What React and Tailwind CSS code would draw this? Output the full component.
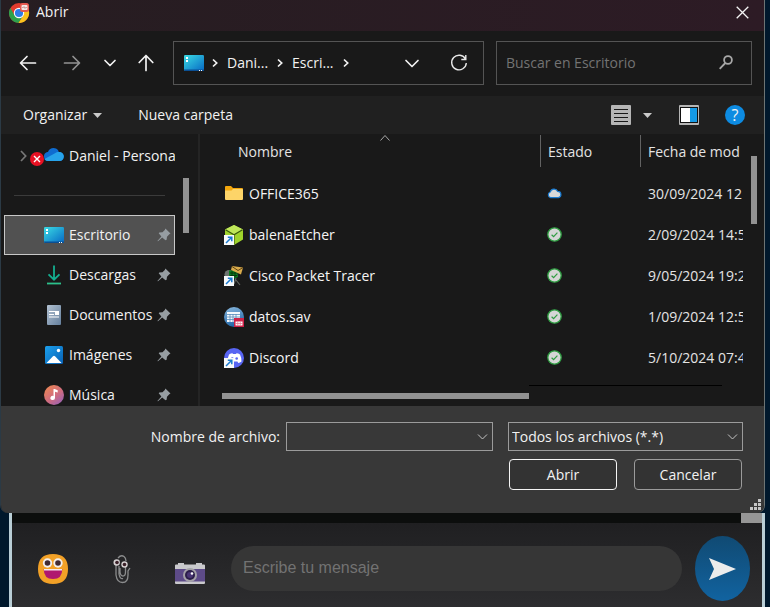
import React from "react";

const NavArrow = ({ d, color = "#f2f2f2", size = 20 }) => (
  <svg width={size} height={size} viewBox="0 0 20 20" fill="none" stroke={color} strokeWidth="1.700" strokeLinecap="round" strokeLinejoin="round" className="shrink-0">
    <path d={d} />
  </svg>
);

const BACK = "M17.500 10H2.800M9 3.500 2.500 10 9 16.500";
const FORWARD = "M2.500 10h14.700M11 3.500l6.500 6.500L11 16.500";
const UP = "M10 17.500V2.800M3.200 9.500 10 2.500l6.800 7";
const DOWN = "M5 7.500l5 5 5-5";

const CrumbArrow = () => (
  <svg width="6" height="10" viewBox="0 0 6 10" fill="none" stroke="#f2f2f2" strokeWidth="1.700" className="shrink-0">
    <path d="M1 1.500 4.700 5 1 8.500" />
  </svg>
);

const Chrome = () => (
  <svg width="22" height="22" viewBox="0 0 22 22" className="shrink-0">
    <circle cx="10" cy="12" r="10" fill="#e33b2e" />
    <path d="M1.300 7A10 10 0 0 0 9.500 22L14.300 14.500 10 12 5.700 14.500Z" fill="#2da14b" />
    <path d="M9.500 22A10 10 0 0 0 19 7.500H10L14.500 14.300Z" fill="#fcc31e" />
    <circle cx="10" cy="12" r="5.200" fill="#fff" />
    <circle cx="10" cy="12" r="4.100" fill="#2f7de9" />
    <rect x="11" y="2" width="9" height="9" rx="2.500" fill="#e65a50" />
    <rect x="12.500" y="4" width="6" height="5" rx="1" fill="#f7e9e7" />
    <path d="M13 6.500h1.500l.5-1 1 2 .5-1H18" stroke="#b9847f" strokeWidth=".7" fill="none" />
  </svg>
);

const Desktop = () => (
  <svg width="20" height="16" viewBox="0 0 20 16" className="shrink-0">
    <defs>
      <linearGradient id="desk" x1="0" y1="0" x2="1" y2="1">
        <stop offset="0" stopColor="#3bdce4" />
        <stop offset="1" stopColor="#0668c4" />
      </linearGradient>
    </defs>
    <rect width="20" height="16" rx="1.300" fill="url(#desk)" />
    <path d="M0 14.500h20v.2a1.300 1.300 0 0 1-1.300 1.300H1.300A1.300 1.300 0 0 1 0 14.700Z" fill="#0a4f94" />
    <path d="M2 2h2v2H2zM2 5h2v2H2zM15 15h1v1h-1zM17 15h1v1h-1z" fill="#fff" />
  </svg>
);

const Pin = () => (
  <svg width="14" height="14" viewBox="0 0 14 14" className="shrink-0">
    <path d="M8.400.6 13.500 5.600 12.300 6.200 10 8.700 9.600 11.800 8.500 12.300 5.200 9.400 1 13.300.4 12.900 4.400 8.500 1.700 5.300 2.300 4.500 5.500 4.300 7.800 1.900Z" fill="#969da2" />
  </svg>
);

const Download = () => (
  <svg width="20" height="20" viewBox="0 0 20 20" fill="none" strokeWidth="1.800" className="shrink-0">
    <path d="M10 .5v14M4.500 9.300l5.500 5.400 5.500-5.400" stroke="#14ae90" />
    <path d="M3 18.500h14" stroke="#2cc08b" />
  </svg>
);

const Doc = () => (
  <svg width="20" height="20" viewBox="0 0 20 20" className="shrink-0">
    <defs>
      <linearGradient id="doc" x1="0" y1="0" x2="1" y2="1">
        <stop offset="0" stopColor="#b3c2d2" />
        <stop offset="1" stopColor="#647f9d" />
      </linearGradient>
    </defs>
    <rect x="3" width="14" height="20" rx="1" fill="url(#doc)" />
    <path d="M5 6.500h6M5 9.500h5M5 12h10" stroke="#fff" strokeWidth="1.200" />
    <rect x="11" y="6" width="4" height="4" fill="#fff" />
  </svg>
);

const Picture = () => (
  <svg width="20" height="20" viewBox="0 0 20 20" className="shrink-0">
    <defs>
      <linearGradient id="pic" x1="0" y1="0" x2="1" y2="1">
        <stop offset="0" stopColor="#1ca0ec" />
        <stop offset="1" stopColor="#0760b5" />
      </linearGradient>
    </defs>
    <rect x="1" y="1" width="18" height="18" rx="1.500" fill="url(#pic)" />
    <path d="M2.500 18 9 11.200q1-1 2 0L17.500 18Z" fill="#fff" />
    <circle cx="14.500" cy="5.500" r="1.700" fill="#fff" />
  </svg>
);

const Music = () => (
  <svg width="20" height="20" viewBox="0 0 20 20" className="shrink-0">
    <defs>
      <linearGradient id="mus" x1="0" y1="0" x2=".8" y2="1">
        <stop offset="0" stopColor="#f08a4b" />
        <stop offset=".6" stopColor="#cf6c80" />
        <stop offset="1" stopColor="#9a62b4" />
      </linearGradient>
    </defs>
    <circle cx="10" cy="10" r="10" fill="url(#mus)" />
    <path d="M9.500 4h1.200l3 1.300v2.200l-2.700-.8v6.300a2.300 2.100 0 1 1-1.500-2Z" fill="#fff" />
  </svg>
);

const OneDrive = () => (
  <svg width="35" height="20" viewBox="0 0 35 20" className="shrink-0">
    <path d="M14 10.500C14 7 16.500 6 18 6c1-3.500 5-5 8-3.500 1.700.8 2.500 2.200 2.800 3.500 3 0 5 2 5 4.500S32 15 29.500 15H18c-2.500 0-4-1.800-4-4.500Z" fill="#0f6cd0" />
    <path d="M17.500 15c-1.500-.2-2.500-1-3-2L25 7.200c1-.8 2.400-1.200 3.800-1.200 3 0 5 2 5 4.500S32 15 29.500 15Z" fill="#27a3ea" />
    <circle cx="7" cy="13" r="7" fill="#e81123" />
    <path d="m4 10 6 6m0-6-6 6" stroke="#fff" strokeWidth="1.400" />
  </svg>
);

const Folder = () => (
  <svg width="20" height="20" viewBox="0 0 20 20" className="shrink-0">
    <path d="M1 3a1 1 0 0 1 1-1h5l2 2h9a1 1 0 0 1 1 1v3H1Z" fill="#f2a60d" />
    <path d="M1 6.500h6.500L9 5h9a1 1 0 0 1 1 1v9a1 1 0 0 1-1 1H2a1 1 0 0 1-1-1Z" fill="#fdd468" />
  </svg>
);

const Shortcut = () => (
  <g>
    <rect x="0" y="10" width="10" height="10" fill="#f8fafb" />
    <path d="M2 18 7.500 12.500M3.800 12.200h4v4" stroke="#1a7ad0" strokeWidth="1.500" fill="none" />
  </g>
);

const Balena = () => (
  <svg width="20" height="20" viewBox="0 0 20 20" className="shrink-0">
    <path d="M10 0 19 4.500v10L10 20 1 14.500v-10Z" fill="#9fd32c" />
    <path d="M10 0 19 4.500 10 9.800 1 4.500Z" fill="#bfe75a" />
    <path d="M1.500 4.800 10 9.800l8.500-5M10 9.800V19" stroke="#39590b" strokeWidth="1.200" fill="none" />
    <Shortcut />
  </svg>
);

const Cisco = () => (
  <svg width="20" height="20" viewBox="0 0 20 20" className="shrink-0">
    <circle cx="5" cy="8.500" r="4.500" fill="#6d7470" />
    <path d="m12 14 4 5M12 12l-2 6" stroke="#62655f" strokeWidth="1.200" />
    <path d="M5 4.500 13 4l1 7-5 2-4-3Z" fill="#0c7d21" />
    <path d="M6 7h7M6 9.500h7M8 4.500v7M11 4.500v7" stroke="#052f0b" strokeWidth=".8" />
    <path d="m8 0 11 1.500-2 7L7 4Z" fill="#d9ab4c" />
    <path d="m8 .5 6 4 5-3" stroke="#5d4214" fill="none" />
    <Shortcut />
  </svg>
);

const Datos = () => (
  <svg width="20" height="20" viewBox="0 0 20 20" className="shrink-0">
    <defs>
      <linearGradient id="dat" x1="0" y1="0" x2=".3" y2="1">
        <stop offset="0" stopColor="#8bb9de" />
        <stop offset="1" stopColor="#2368a9" />
      </linearGradient>
    </defs>
    <circle cx="10" cy="10" r="10" fill="url(#dat)" />
    <path d="M3 5h13v10H3Z" fill="#f3f8fc" />
    <path d="M3 7.500h13M3 10h13M3 12.500h13M6 7v8M9 7v8M12 7v8" stroke="#568bbb" strokeWidth=".8" />
    <rect x="10" y="11" width="10" height="9" fill="#cf2148" />
    <path d="M11.500 14.500h7v4h-7Z" fill="#fff" />
    <path d="M11 16.500h8M13.800 14v5M16.300 14v5" stroke="#e57c94" strokeWidth=".8" />
  </svg>
);

const Discord = () => (
  <svg width="20" height="20" viewBox="0 0 20 20" className="shrink-0">
    <circle cx="10" cy="10" r="10" fill="#5865f2" />
    <path d="M5 6.500Q7 5.200 8.500 5.200l.5.800h3l.5-.8q1.700 0 3.500 1.300 1.700 3.500 1.500 7-1.500 1.300-3.200 1.500l-.9-1.400H8l-1 1.400q-2-.3-3.300-1.500Q3.500 10 5 6.500Z" fill="#fff" />
    <circle cx="8.300" cy="10.500" r="1.300" fill="#5865f2" />
    <circle cx="12.700" cy="10.500" r="1.300" fill="#5865f2" />
    <Shortcut />
  </svg>
);

const Synced = () => (
  <svg width="15" height="15" viewBox="0 0 15 15" role="img" aria-label="Disponible">
    <circle cx="7.500" cy="7.500" r="6.700" fill="#d6d6d6" stroke="#2e9c41" strokeWidth="1.300" />
    <path d="m4.600 7.800 2 1.900 3.800-4" fill="none" stroke="#2e9c41" strokeWidth="1.200" />
  </svg>
);

const CloudOnly = () => (
  <svg width="15" height="15" viewBox="0 0 15 15" role="img" aria-label="En la nube">
    <path d="M3.600 11.700a3 3 0 0 1-.4-5.700A4 4 0 0 1 10.700 5.400a3.200 3.200 0 0 1 .8 6.300Z" fill="#d9d9d9" stroke="#1b7bd0" strokeWidth="1.200" />
  </svg>
);

const Smiley = () => (
  <svg width="30" height="30" viewBox="0 0 30 30">
    <path d="M15 0C25 0 30 5 30 15S25 30 15 30 0 25 0 15 5 0 15 0Z" fill="#f2a127" />
    <circle cx="9.500" cy="9" r="4.700" fill="#f1eeee" />
    <circle cx="20" cy="9" r="4.700" fill="#f1eeee" />
    <circle cx="9.500" cy="9" r="2.800" fill="#402a32" />
    <circle cx="20" cy="9" r="2.800" fill="#402a32" />
    <path d="M5.700 15h18.600q0 10-9.300 10T5.700 15Z" fill="#b0176f" />
    <path d="M6 15h18v1.500H6Z" fill="#f5e9ee" />
  </svg>
);

const Clip = () => (
  <svg width="18" height="30" viewBox="0 0 18 30" fill="none">
    <path d="M5 4Q8 .5 11 2.500q2 1.500 2 4.500M3 11v10q1 7.500 6.500 7.500T15 21v-4l2-3M7 14v4q.5 4 3 4t2.500-4v-7M6 12v8q1 5.500 4 4.500" stroke="#8b8c8d" strokeWidth="1.300" />
    <circle cx="3.700" cy="8.500" r="3.200" fill="#d5d0d1" />
    <circle cx="11.500" cy="10.500" r="3.200" fill="#d5d0d1" />
    <circle cx="4" cy="8.500" r="1.800" fill="#3b2028" />
    <circle cx="11.500" cy="10.500" r="1.800" fill="#3b2028" />
  </svg>
);

const Camera = () => (
  <svg width="30" height="21" viewBox="0 0 30 21">
    <path d="M3 0h6v1.500h12V0h6v1.500h2a1 1 0 0 1 1 1V20a1 1 0 0 1-1 1H1a1 1 0 0 1-1-1V2.500a1 1 0 0 1 1-1h2Z" fill="#c9c9cc" />
    <rect y="6" width="30" height="12.500" fill="#5d4b88" />
    <circle cx="15" cy="12" r="7" fill="#a4a2a8" />
    <circle cx="15" cy="12" r="5" fill="#2b1e49" />
    <circle cx="15" cy="12" r="3" fill="#493574" />
    <circle cx="17" cy="10.500" r="1.300" fill="#fff" />
  </svg>
);

const places = [
  { name: "Escritorio", Icon: Desktop, active: true },
  { name: "Descargas", Icon: Download },
  { name: "Documentos", Icon: Doc },
  { name: "Imágenes", Icon: Picture },
  { name: "Música", Icon: Music },
];

const files = [
  { name: "OFFICE365", Icon: Folder, Status: CloudOnly, date: "30/09/2024 12" },
  { name: "balenaEtcher", Icon: Balena, Status: Synced, date: "2/09/2024 14:5" },
  { name: "Cisco Packet Tracer", Icon: Cisco, Status: Synced, date: "9/05/2024 19:2" },
  { name: "datos.sav", Icon: Datos, Status: Synced, date: "1/09/2024 12:5" },
  { name: "Discord", Icon: Discord, Status: Synced, date: "5/10/2024 07:4" },
];

const ComboArrow = () => (
  <svg width="11" height="6" viewBox="0 0 11 6" fill="none" stroke="#c4c4c4" className="pointer-events-none absolute right-[5px] top-3">
    <path d="m1 .5 4.500 4.500L10 .5" />
  </svg>
);

function TitleBar() {
  return (
    <header className="flex h-[31px] items-start justify-between bg-linear-to-r from-[#261d21] to-[#2d1b25] pl-2 pr-[15px]">
      <div className="flex items-center gap-[5px]">
        <Chrome />
        <h1 className="h-6 leading-6">Abrir</h1>
      </div>
      <button aria-label="Cerrar" className="pt-[6px]">
        <svg width="13" height="13" viewBox="0 0 13 13" stroke="#f4f4f4" strokeWidth="1.300">
          <path d="m.7.7 11.600 11.600m0-11.600L.7 12.300" />
        </svg>
      </button>
    </header>
  );
}

function NavBar() {
  return (
    <nav className="flex h-[65px] items-center bg-[#191919] pb-0.5 pl-[17px] pr-3">
      <button aria-label="Atrás"><NavArrow d={BACK} /></button>
      <button aria-label="Adelante" className="ml-6"><NavArrow d={FORWARD} color="#929292" /></button>
      <button aria-label="Recientes" className="ml-[18px]"><NavArrow d={DOWN} /></button>
      <button aria-label="Subir" className="ml-4 mr-[17px]"><NavArrow d={UP} /></button>
      <div className="flex h-11 min-w-0 flex-[5] items-center border border-[#545454] pl-[10px] pr-[15px]">
        <Desktop />
        <span className="ml-2 flex items-center gap-[9px]">
          <CrumbArrow />
          <button>Dani...</button>
          <CrumbArrow />
          <button>Escri...</button>
          <CrumbArrow />
        </span>
        <button aria-label="Ubicaciones anteriores" className="ml-auto">
          <NavArrow d="M4 7.500l6 6 6-6" />
        </button>
        <button aria-label="Actualizar" className="ml-7">
          <svg width="18" height="18" viewBox="0 0 18 18" fill="none" stroke="#e8e8e8" strokeWidth="1.400">
            <path d="M15.500 5.200A7.300 7.300 0 1 0 16.300 9M15.800 1v4.500h-4.500" />
          </svg>
        </button>
      </div>
      <label className="ml-3 flex h-11 min-w-0 flex-[4] items-center border border-[#545454] pl-[9px] pr-[18px]">
        <input aria-label="Buscar en Escritorio" placeholder="Buscar en Escritorio" className="w-full min-w-0 bg-transparent placeholder-[#737373] outline-none" />
        <svg width="14" height="15" viewBox="0 0 14 15" fill="none" stroke="#a8a8a8" strokeWidth="1.800" className="shrink-0">
          <circle cx="9" cy="5" r="3.900" />
          <path d="M6.300 8 .7 13.800" />
        </svg>
      </label>
    </nav>
  );
}

const Triangle = () => (
  <svg width="9" height="5" viewBox="0 0 9 5"><path d="M0 0h9L4.500 5Z" fill="#cacaca" /></svg>
);

function Toolbar() {
  return (
    <div className="flex h-[38px] items-center bg-[#202020] pl-[22px] pr-[19px]">
      <button className="flex items-center gap-[6px]">Organizar <Triangle /></button>
      <button className="ml-9">Nueva carpeta</button>
      <button aria-label="Vista" className="ml-auto">
        <svg width="20" height="20" viewBox="0 0 20 20">
          <rect width="20" height="20" rx="1" fill="#b5b5b5" />
          <path d="M3 4.500h14M3 8.500h14M3 12.500h14M3 16.500h14" stroke="#191919" />
        </svg>
      </button>
      <button aria-label="Más vistas" className="ml-3"><Triangle /></button>
      <button aria-label="Panel de vista previa" className="ml-[27px]">
        <svg width="20" height="20" viewBox="0 0 20 20">
          <rect width="20" height="20" rx="1" fill="#b5b5b5" />
          <rect x="1.500" y="2.500" width="17" height="15" fill="#fff" stroke="#111" />
          <rect x="11" y="3" width="7" height="14" fill="#159ae6" />
        </svg>
      </button>
      <button aria-label="Ayuda" className="ml-[26px] size-5 rounded-full bg-[#0d8be2] text-base leading-5">?</button>
    </div>
  );
}

function Sidebar() {
  return (
    <aside className="flex w-[199px] shrink-0 border-r-2 border-[#242424]">
      <div className="ml-[3px] w-[171px] overflow-hidden pt-0.5">
        <button className="flex h-10 items-center whitespace-nowrap pl-4">
          <svg width="7" height="12" viewBox="0 0 7 12" fill="none" stroke="#777" strokeWidth="1.700" className="mr-[3px] shrink-0">
            <path d="m1 1 4.700 5L1 11" />
          </svg>
          <OneDrive />
          <span className="ml-1">Daniel - Persona</span>
        </button>
        <hr className="mx-[10px] my-[19px] border-[#3b3b3b]" />
        <ul>
          {places.map(({ name, Icon, active }) => (
            <li key={name}>
              <button className={active ? "flex h-10 w-full items-center border border-[#c8c8c8] bg-[#515151] pl-[39px] pr-[3px]" : "flex h-10 w-full items-center border border-transparent pl-[39px] pr-[3px]"}>
                <Icon />
                <span className="ml-[5px] mr-auto leading-[22px]">{name}</span>
                <Pin />
              </button>
            </li>
          ))}
        </ul>
      </div>
      <div className="ml-2 mt-11 h-[55px] w-[6px] bg-[#929292]" />
    </aside>
  );
}

function FileList() {
  return (
    <section className="flex min-w-0 flex-1 flex-col pl-px pr-[7px]">
      <div className="flex">
        <div className="min-w-0 flex-1 overflow-hidden">
          <table className="w-full table-fixed text-[#e4e4e4]">
            <thead>
              <tr className="h-[39px] text-left align-top">
                <th className="relative p-0 font-normal">
                  <div className="pl-[37px] leading-9">Nombre</div>
                  <svg width="10" height="6" viewBox="0 0 10 6" fill="none" stroke="#a9a9a9" className="absolute right-[150px] top-px">
                    <path d="m.5 5.500 4.500-5 4.500 5" />
                  </svg>
                </th>
                <th className="w-[100px] p-0 font-normal">
                  <div className="mt-px h-8 border-l border-[#626262] pl-[7px] leading-[34px]">Estado</div>
                </th>
                <th className="w-[103px] p-0 font-normal">
                  <div className="mt-px h-8 whitespace-nowrap border-l border-[#626262] pl-[7px] leading-[34px]">Fecha de mod</div>
                </th>
              </tr>
            </thead>
            <tbody>
              {files.map(({ name, Icon, Status, date }) => (
                <tr key={name} className="h-[41px]">
                  <td className="p-0">
                    <div className="flex items-center gap-[5px] pl-[23px] text-[#f5f5f5]"><Icon />{name}</div>
                  </td>
                  <td className="p-0 pl-[7px]"><Status /></td>
                  <td className="overflow-hidden whitespace-nowrap p-0 pl-2">{date}</td>
                </tr>
              ))}
            </tbody>
          </table>
        </div>
        <div className="ml-2 mt-[22px] h-[68px] w-[6px] shrink-0 bg-[#929292]" />
      </div>
      <div className="ml-[328px] mr-[35px] mt-[7px] h-px bg-black" />
      <div className="ml-[21px] mr-[228px] mt-[7px] h-[6px] bg-[#929292]" />
    </section>
  );
}

function Footer() {
  return (
    <footer className="bg-[#383838] pb-0.5 pt-4">
      <div className="flex items-center pr-[21px]">
        <label htmlFor="filename" className="ml-auto mr-[6px] whitespace-nowrap">Nombre de archivo:</label>
        <div className="relative w-[207px]">
          <input id="filename" className="block h-[29px] w-full border border-[#9b9b9b] bg-[#383838] pl-1 pr-5 outline-none" />
          <ComboArrow />
        </div>
        <div className="relative ml-[15px] w-[235px]">
          <select aria-label="Tipo de archivo" className="block h-[29px] w-full appearance-none border border-[#9b9b9b] bg-[#383838] pl-[3px] pr-5 outline-none">
            <option>Todos los archivos (*.*)</option>
          </select>
          <ComboArrow />
        </div>
      </div>
      <div className="mt-2 flex justify-end gap-[17px] pr-[22px]">
        <button className="h-[31px] w-[108px] rounded border border-[#f5f5f5] bg-[#333]">Abrir</button>
        <button className="h-[31px] w-[108px] rounded border border-[#9b9b9b] bg-[#333]">Cancelar</button>
      </div>
      <div className="mt-[9px] flex justify-end pr-[3px]">
        <svg width="11" height="12" viewBox="0 0 11 12" fill="#c4c4c4">
          <path d="M8 0h3v3H8zM4 4h3v3H4zM8 4h3v3H8zM0 8h3v3H0zM4 8h3v3H4zM8 8h3v3H8z" />
        </svg>
      </div>
    </footer>
  );
}

function Chat() {
  return (
    <section className="ml-[9px] mr-[5px] flex flex-1 flex-col border-x-[3px] border-[#b9ced6] bg-linear-to-b from-[#1e1e20] to-[#2d2d2f]">
      <div className="flex h-[10px] justify-end bg-[#0c0e0d]">
        <div className="w-[21px] bg-[#969696]" />
      </div>
      <form className="flex items-center pl-[26px] pr-3 pt-[13px]">
        <button type="button" aria-label="Emojis"><Smiley /></button>
        <button type="button" aria-label="Adjuntar" className="ml-[45px]"><Clip /></button>
        <button type="button" aria-label="Cámara" className="ml-11 pt-[10px]"><Camera /></button>
        <input aria-label="Mensaje" placeholder="Escribe tu mensaje" className="ml-[26px] h-[45px] min-w-0 flex-1 rounded-full bg-[#363636] px-3 pb-0.5 font-['Liberation_Sans',Arial,sans-serif] text-base placeholder-[#727272] outline-none" />
        <button type="button" aria-label="Enviar" className="ml-[13px] flex h-[65px] w-[55px] items-center justify-center rounded-[50%] bg-linear-to-b from-[#104a73] to-[#1163a0]">
          <svg width="27" height="22" viewBox="0 0 27 22"><path d="M0 0 27 11 0 22 5 11Z" fill="#ececec" /></svg>
        </button>
      </form>
    </section>
  );
}

export default function App() {
  return (
    <main className="flex min-h-screen flex-col overflow-hidden bg-[#00182c] font-['Open_Sans','Noto_Sans',sans-serif] text-sm text-[#f2f2f2]">
      <div className="mr-[5px] overflow-hidden rounded-b-lg border-l border-r border-l-[#2b3a45] border-r-[#6c7474] bg-[#191919]">
        <TitleBar />
        <NavBar />
        <Toolbar />
        <div className="flex h-68 overflow-hidden">
          <Sidebar />
          <FileList />
        </div>
        <Footer />
      </div>
      <Chat />
    </main>
  );
}
